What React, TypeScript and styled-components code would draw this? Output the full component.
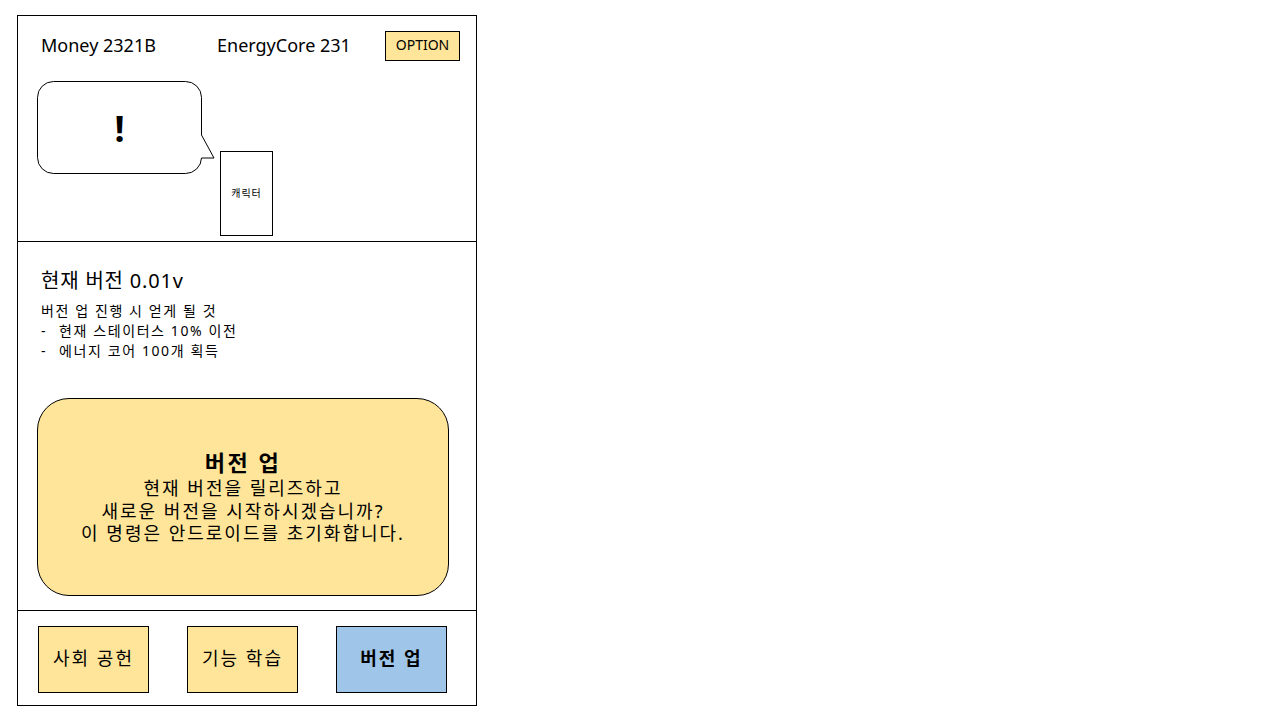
import React from "react";
import styled, { createGlobalStyle } from "styled-components";

const GlobalStyle = createGlobalStyle`
  html, body { margin: 0; padding: 0; background: #fff; }
  body { font-family: "Noto Sans", "Noto Sans CJK KR", sans-serif; color: #000; }
`;

const Page = styled.div`
  padding: 15px 0 0 17px;
`;

const Frame = styled.div`
  box-sizing: border-box;
  width: 460px;
  height: 691px;
  border: 1px solid #000;
  display: flex;
  flex-direction: column;
`;

const TopSection = styled.section`
  height: 225px;
  flex-shrink: 0;
  display: flex;
  flex-direction: column;
`;

const HeaderRow = styled.div`
  display: flex;
  align-items: center;
  height: 30px;
  margin-top: 15px;
  padding-left: 23px;
`;

const Stat = styled.span<{ $w: number }>`
  width: ${(p) => p.$w}px;
  font-size: 18px;
  line-height: 24px;
  padding-bottom: 3px;
  white-space: nowrap;
`;

const OptionButton = styled.div`
  box-sizing: border-box;
  width: 75px;
  height: 30px;
  padding-bottom: 3px;
  border: 1px solid #000;
  background: #ffe599;
  display: flex;
  align-items: center;
  justify-content: center;
  font-size: 14px;
`;

const Scene = styled.div`
  display: flex;
  align-items: flex-start;
  margin-top: 20px;
  padding-left: 19px;
`;

const Bubble = styled.div`
  position: relative;
  width: 178px;
  height: 94px;
`;

const BubbleShape = styled.svg`
  position: absolute;
  left: 0;
  top: 0;
`;

const BubbleText = styled.div`
  position: relative;
  width: 165px;
  height: 95px;
  display: flex;
  align-items: center;
  justify-content: center;
  font-size: 36px;
  font-weight: 700;
`;

const Character = styled.div`
  box-sizing: border-box;
  width: 53px;
  height: 85px;
  margin: 70px 0 0 5px;
  padding-bottom: 3px;
  border: 1px solid #000;
  display: flex;
  align-items: center;
  justify-content: center;
  font-size: 10px;
  letter-spacing: 1px;
`;

const MiddleSection = styled.section`
  box-sizing: border-box;
  height: 369px;
  flex-shrink: 0;
  border-top: 1px solid #000;
  padding: 25px 0 0 0;
  display: flex;
  flex-direction: column;
`;

const VersionTitle = styled.div`
  padding-left: 23px;
  font-size: 20px;
  line-height: 28px;
  letter-spacing: 0.8px;
`;

const InfoList = styled.div`
  margin-top: 6px;
  padding-left: 23px;
  font-size: 14px;
  line-height: 20px;
  letter-spacing: 1.6px;
`;

const InfoItem = styled.div`
  display: flex;
`;

const Dash = styled.span`
  width: 18px;
`;

const BigButton = styled.div`
  box-sizing: border-box;
  width: 412px;
  height: 198px;
  flex-shrink: 0;
  margin: 37px 0 0 19px;
  border: 1px solid #000;
  border-radius: 32px;
  background: #ffe599;
  display: flex;
  flex-direction: column;
  align-items: center;
  justify-content: center;
  text-align: center;
`;

const BigTitle = styled.div`
  font-size: 22px;
  font-weight: 700;
  line-height: 26px;
  letter-spacing: 2.5px;
  margin-bottom: 2px;
`;

const BigLine = styled.div`
  font-size: 18px;
  line-height: 22.5px;
  letter-spacing: 2px;
`;

const BottomSection = styled.section`
  box-sizing: border-box;
  height: 95px;
  flex-shrink: 0;
  border-top: 1px solid #000;
  padding: 15px 0 0 20px;
  display: flex;
  gap: 38px;
  align-items: flex-start;
`;

const NavButton = styled.div<{ $active?: boolean }>`
  box-sizing: border-box;
  width: 111px;
  height: 67px;
  padding-bottom: 5px;
  border: 1px solid #000;
  background: ${(p) => (p.$active ? "#9fc5e8" : "#ffe599")};
  font-weight: ${(p) => (p.$active ? 700 : 400)};
  font-size: 18px;
  letter-spacing: 2px;
  display: flex;
  align-items: center;
  justify-content: center;
`;

export default function App() {
  return (
    <>
      <GlobalStyle />
      <Page>
        <Frame>
          <TopSection>
            <HeaderRow>
              <Stat $w={176}>Money 2321B</Stat>
              <Stat $w={168}>EnergyCore 231</Stat>
              <OptionButton>OPTION</OptionButton>
            </HeaderRow>
            <Scene>
              <Bubble>
                <BubbleShape width="178" height="94" viewBox="0 0 178 94">
                  <path
                    d="M16.5 0.5 H148.5 A16 16 0 0 1 164.5 16.5 V54 L177 77 H164.5 A16 16 0 0 1 148.5 92.5 H16.5 A16 16 0 0 1 0.5 76.5 V16.5 A16 16 0 0 1 16.5 0.5 Z"
                    fill="#fff"
                    stroke="#000"
                    strokeWidth="1"
                  />
                </BubbleShape>
                <BubbleText>!</BubbleText>
              </Bubble>
              <Character>캐릭터</Character>
            </Scene>
          </TopSection>
          <MiddleSection>
            <VersionTitle>현재 버전 0.01v</VersionTitle>
            <InfoList>
              <div>버전 업 진행 시 얻게 될 것</div>
              <InfoItem>
                <Dash>-</Dash>
                <span>현재 스테이터스 10% 이전</span>
              </InfoItem>
              <InfoItem>
                <Dash>-</Dash>
                <span>에너지 코어 100개 획득</span>
              </InfoItem>
            </InfoList>
            <BigButton>
              <BigTitle>버전 업</BigTitle>
              <BigLine>현재 버전을 릴리즈하고</BigLine>
              <BigLine>새로운 버전을 시작하시겠습니까?</BigLine>
              <BigLine>이 명령은 안드로이드를 초기화합니다.</BigLine>
            </BigButton>
          </MiddleSection>
          <BottomSection>
            <NavButton>사회 공헌</NavButton>
            <NavButton>기능 학습</NavButton>
            <NavButton $active>버전 업</NavButton>
          </BottomSection>
        </Frame>
      </Page>
    </>
  );
}
